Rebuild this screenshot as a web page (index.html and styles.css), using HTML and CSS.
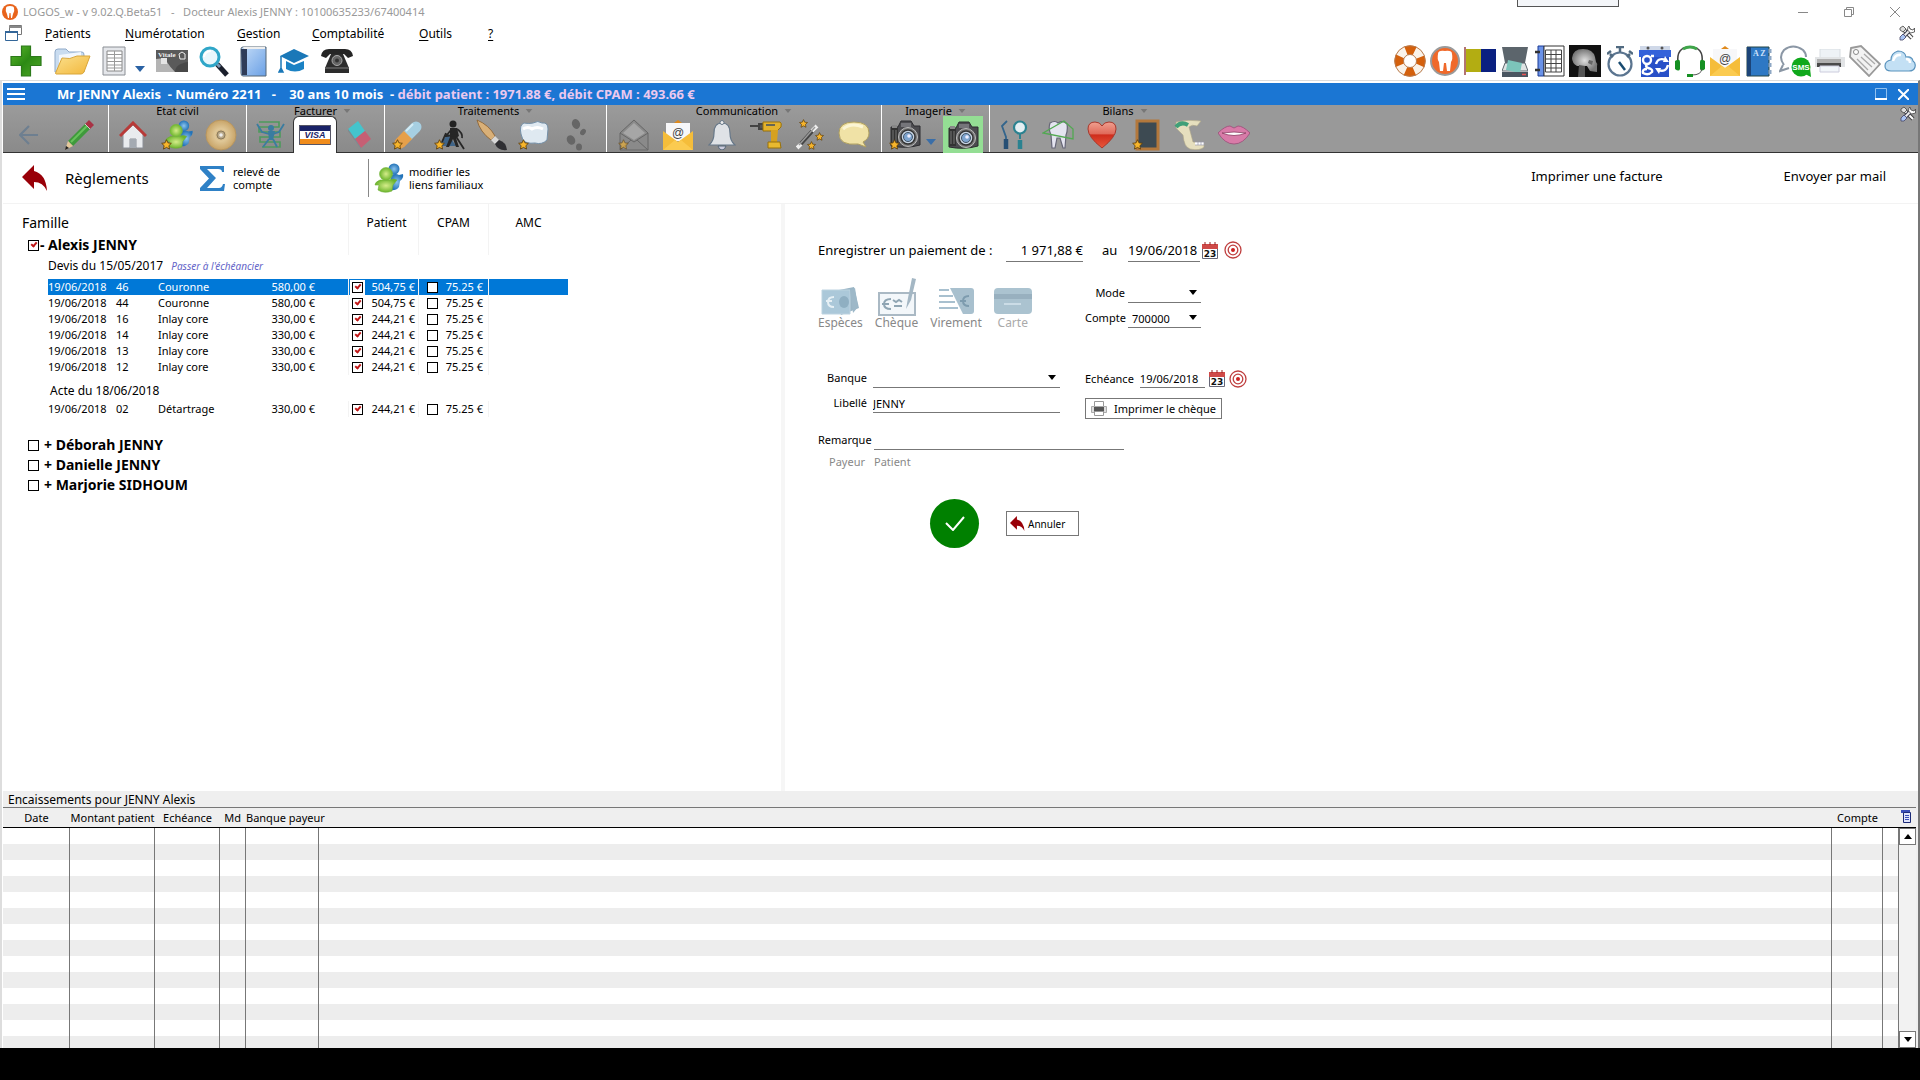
FILE: index.html
```html
<!DOCTYPE html>
<html lang="fr">
<head>
  <meta charset="UTF-8">
  <title>LOGOS_w - Règlements</title>
  <link rel="stylesheet" href="styles.css">
</head>
<body>

<!-- shared icons -->
<svg class="defs" width="0" height="0" aria-hidden="true">
  <defs>
    <linearGradient id="gGreen" x1="0" y1="0" x2="1" y2="1"><stop offset="0" stop-color="#5cb82c"/><stop offset=".5" stop-color="#2c8a14"/><stop offset="1" stop-color="#4fa828"/></linearGradient>
    <linearGradient id="gFolder" x1="0" y1="0" x2="1" y2="1"><stop offset="0" stop-color="#fbe08c"/><stop offset="1" stop-color="#f2b73c"/></linearGradient>
    <linearGradient id="gBlue" x1="0" y1="0" x2="1" y2="1"><stop offset="0" stop-color="#c4dcf7"/><stop offset="1" stop-color="#6aa0e6"/></linearGradient>
    <linearGradient id="gHeart" x1="0" y1="0" x2="0" y2="1"><stop offset="0" stop-color="#f0a090"/><stop offset=".45" stop-color="#e06a5a"/><stop offset=".5" stop-color="#cf2c1c"/><stop offset="1" stop-color="#e8583c"/></linearGradient>
    <radialGradient id="gLeaf"><stop offset="0" stop-color="#d5ec8a"/><stop offset="1" stop-color="#6cb52c"/></radialGradient>
    <radialGradient id="gBall"><stop offset="0" stop-color="#8cc4ee"/><stop offset="1" stop-color="#2373b8"/></radialGradient>
    <radialGradient id="gCd"><stop offset="0" stop-color="#b08a50"/><stop offset=".4" stop-color="#e0c898"/><stop offset="1" stop-color="#c8a468"/></radialGradient>
    <radialGradient id="gSkull"><stop offset="0" stop-color="#e0e0e0"/><stop offset="1" stop-color="#777"/></radialGradient>
  </defs>
  <symbol id="star" viewBox="0 0 12 12"><path d="M6 .8l1.600 3.400 3.700.5-2.700 2.600.7 3.700L6 9.200 2.700 11l.7-3.700L.7 4.700l3.700-.5z" fill="#f7b52c" stroke="#5a3a08" stroke-width=".9"/></symbol>
  <symbol id="people" viewBox="0 0 30 30">
    <path d="M17 12q5-2 8 0l4-1q1 4-3 7l-1 6q-3 4-9 3z" fill="url(#gBall)"/><circle cx="20" cy="6" r="5.500" fill="url(#gBall)"/>
    <path d="M6 17q-5 2-5 5l4 0-1 5q6 4 14 1l1-6 4-5q-4-2-8 0z" fill="url(#gLeaf)" stroke="#6fae36" stroke-width=".6"/><circle cx="12" cy="11" r="6.500" fill="url(#gLeaf)" stroke="#7cb944" stroke-width=".6"/>
  </symbol>
  <symbol id="tools" viewBox="0 0 16 16">
    <path d="M4 4l9 9" stroke="#444" stroke-width="4"/><path d="M4 4l9 9" stroke="#fff" stroke-width="2"/>
    <path d="M12 4L4 12" stroke="#445" stroke-width="4"/><path d="M12 4L5 11" stroke="#eee" stroke-width="2"/>
    <path d="M1 12l3-3 3 3-3 3H1z" fill="#a9c4f5" stroke="#446" stroke-width=".8"/><path d="M10 1l1 3 3 1 1.500-2v4l-4 1-3-3 .5-3z" fill="#fff" stroke="#444" stroke-width=".8"/>
    <path d="M1 3l3-2 3 3-3 3-3-2z" fill="#ddd" stroke="#444" stroke-width=".8"/>
  </symbol>
  <symbol id="undo" viewBox="0 0 26 26"><path d="M0 12L12 0v6q12 3 13 20-4-9-13-9v7z" fill="#990008"/></symbol>
  <symbol id="mail" viewBox="0 0 32 32"><path d="M12 4l4-3 4 3z" fill="#e08a1c"/><path d="M4 4h24v18H4z" fill="#f7f7f9"/><path d="M1 12l15 11 15-11v19H1z" fill="#f5bd3a"/><path d="M1 31l12-10 3 2 3-2 12 10z" fill="#fbcb50"/></symbol>
  <symbol id="camera" viewBox="0 0 32 30">
    <path d="M2 8h7l3-6h10l3 5h6v19q-14 4-29 1z" fill="#4b4b4f" stroke="#2c2c30"/><path d="M2 9h7v17H2z" fill="#333"/><path d="M12 4h10v4H12z" fill="#75757a"/><path d="M3 6h5v3H3z" fill="#888"/><path d="M4 11v13M7 11v13" stroke="#777"/>
    <circle cx="19" cy="18" r="9.500" fill="#777" stroke="#bbb"/><circle cx="19" cy="18" r="7" fill="#c6d4e4" stroke="#333" stroke-width="1.500"/><circle cx="19" cy="18" r="4.500" fill="#7da4cf" stroke="#456"/><circle cx="20" cy="17" r="1.800" fill="#eef"/>
  </symbol>
  <symbol id="calendar" viewBox="0 0 16 17"><path d="M.5 2.500h15v14H.5z" fill="#fff" stroke="#667"/><path d="M0 2h16v5H0z" fill="#cf4a48"/><path d="M3 0v3M8 0v3M13 0v3" stroke="#922"/></symbol>
  <symbol id="target" viewBox="0 0 18 18"><g fill="none" stroke="#bf3f3f"><circle cx="9" cy="9" r="8" stroke-width="1.300"/><circle cx="9" cy="9" r="4.800" stroke-width="1.300"/></g><circle cx="9" cy="9" r="2" fill="#c22"/></symbol>
  <symbol id="caret" viewBox="0 0 10 6"><path d="M0 0h10L5 6z"/></symbol>
</svg>

<div class="app">
  <div class="notch"></div>

  <header class="titlebar">
    <svg width="16" height="16" viewBox="0 0 16 16"><circle cx="8" cy="8" r="8" fill="#e8641c"/><path d="M4 4q0-2 4-2t4 2q1 3-1 6l-1 4H9L8.500 9h-1L7 14H6l-1-4Q3 7 4 4z" fill="#fff"/></svg>
    <span class="app-title">LOGOS_w - v 9.02.Q.Beta51 &nbsp; - &nbsp; Docteur Alexis JENNY : 10100635233/67400414</span>
    <div class="win-buttons">
      <button aria-label="Réduire"><svg width="10" height="10" viewBox="0 0 10 10"><path d="M0 5.500h10" stroke="#888"/></svg></button>
      <button aria-label="Restaurer"><svg width="10" height="10" viewBox="0 0 10 10"><path d="M.5 2.500h7v7h-7zM2.500 2V.5h7v7H8" fill="none" stroke="#888"/></svg></button>
      <button aria-label="Fermer"><svg width="10" height="10" viewBox="0 0 10 10"><path d="M0 0l10 10M10 0L0 10" stroke="#888"/></svg></button>
    </div>
  </header>

  <nav class="menubar">
    <svg width="17" height="16" viewBox="0 0 17 16"><path d="M4.500.5h12v9h-12z" fill="#fff" stroke="#777"/><path d="M4 1h13v2H4z" fill="#888"/><path d="M.5 6.500h12v9H.5z" fill="#fff" stroke="#369"/><path d="M0 6h13v2H0z" fill="#369"/></svg>
    <a href="#" class="m-patients"><u>P</u>atients</a>
    <a href="#" class="m-num"><u>N</u>umérotation</a>
    <a href="#" class="m-gestion"><u>G</u>estion</a>
    <a href="#" class="m-compta"><u>C</u>omptabilité</a>
    <a href="#" class="m-outils"><u>O</u>utils</a>
    <a href="#"><u>?</u></a>
    <button class="tools" aria-label="Options"><svg width="16" height="16"><use href="#tools"/></svg></button>
  </nav>

  <div class="mainbar">
    <div class="main-left">
      <button aria-label="Nouveau"><svg width="32" height="32" viewBox="0 0 32 32"><path d="M11.500 1h9v10.500H31v9H20.500V31h-9V20.500H1v-9h10.500z" fill="url(#gGreen)" stroke="#2c7a1a" stroke-width="1.200"/></svg></button>
      <button aria-label="Ouvrir"><svg width="38" height="28" viewBox="0 0 38 28"><path d="M2 25V5q0-3 3-3h8l3 3h13q2 0 2 3v17z" fill="#c9dcf0" stroke="#8fa9c8"/><path d="M6 8l22-3v12H6z" fill="#f2f7fd"/><path d="M9 11q8 2 15-2l13 0-6 16q-1 2-3 2H3q-1 0 0-2z" fill="url(#gFolder)" stroke="#d9a63a"/></svg></button>
      <button class="list-btn" aria-label="Listes">
        <svg width="25" height="30" viewBox="0 0 25 30"><path d="M1 1h22v28H1z" fill="#e4e6ea" stroke="#8a8e94"/><path d="M5 5h15v20H5z" fill="#fff" stroke="#888"/><path d="M5 8.500h15M5 12h15M5 15.500h15M5 19h15M5 22h15M12.500 5v20" stroke="#999"/></svg>
        <svg width="10" height="6" fill="#2a62a4"><use href="#caret"/></svg>
      </button>
      <button aria-label="Carte Vitale"><svg width="32" height="22" viewBox="0 0 32 22"><path d="M0 0h32v22H0z" fill="#5a5a5a"/><path d="M0 9q8-2 11 3t8 10H0z" fill="#b4b4b4"/><path d="M5 8h6v6H5z" fill="#e4e4e4"/><path d="M19 22q0-8 13-10v10z" fill="#484848"/><text x="2" y="7" class="vitale">Vitale</text><path d="M23 4l3-2 3 2v5h-5z" fill="none" stroke="#eee"/></svg></button>
      <button aria-label="Rechercher"><svg width="30" height="31" viewBox="0 0 30 31"><path d="M18 18l10 11" stroke="#1a1f2c" stroke-width="5"/><path d="M17 17l4 4" stroke="#7b98b5" stroke-width="3"/><circle cx="11" cy="11" r="9" fill="#e9f7fc" stroke="#2fa6c8" stroke-width="3"/><path d="M5 11q1-6 7-6" fill="none" stroke="#fff" stroke-width="2"/></svg></button>
      <button aria-label="Livre"><svg width="27" height="31" viewBox="0 0 27 31"><path d="M1 3q0-2 2-2h23v29H3q-2 0-2-3z" fill="url(#gBlue)" stroke="#567"/><path d="M1 3h6v26H2z" fill="#2f3c58"/><path d="M3 1h22v2H4z" fill="#eee"/></svg></button>
      <button aria-label="Formation"><svg width="32" height="26" viewBox="0 0 32 26"><path d="M16 1L31 8l-15 7L2 8z" fill="#1a78b8"/><path d="M8 13l8 4 10-4v8q-9 5-18 0z" fill="#1c82c4"/><path d="M3 8v12l-2 4h4l-2-4" fill="#1a78b8" stroke="#1a78b8" stroke-width="1.500"/></svg></button>
      <button aria-label="Téléphone"><svg width="32" height="26" viewBox="0 0 32 26"><path d="M0 8Q1 1 8 1h16q7 0 8 7l-5 2-4-4H9l-4 4z" fill="#252525"/><path d="M10 6h12l6 14v5H4v-5z" fill="#2c2c2c"/><path d="M4 19h24v2H4z" fill="#555"/><circle cx="16" cy="12.500" r="5" fill="#666" stroke="#aaa"/><circle cx="16" cy="12.500" r="2" fill="#333"/></svg></button>
    </div>
    <div class="main-right">
      <button aria-label="Aide"><svg width="32" height="32" viewBox="0 0 32 32"><circle cx="16" cy="16" r="11" fill="none" stroke="#faf3ea" stroke-width="9"/><circle cx="16" cy="16" r="11" fill="none" stroke="#d4600c" stroke-width="9" stroke-dasharray="9 8.280" stroke-dashoffset="4.500"/><g fill="none" stroke="#b8794a"><circle cx="16" cy="16" r="15.300"/><circle cx="16" cy="16" r="6.500"/></g></svg></button>
      <button aria-label="Dentaire"><svg width="30" height="30" viewBox="0 0 30 30"><circle cx="15" cy="15" r="14" fill="#f0692a" stroke="#9a9a9a" stroke-width="2"/><path d="M8 8q0-4 7-3 7-1 7 3 1 5-1 8l-1 9h-3l-1-8h-2l-1 8h-3l-1-9q-2-3-1-8z" fill="#fff"/></svg></button>
      <button aria-label="Drapeau"><svg width="32" height="28" viewBox="0 0 32 28"><path d="M1 0v28" stroke="#944" stroke-width="1.500"/><path d="M2 2h15v23H2z" fill="#b3ad12"/><path d="M17 2h15v23H17z" fill="#0a2080"/></svg></button>
      <button aria-label="Scanner"><svg width="26" height="31" viewBox="0 0 26 31"><path d="M0 1h26l-3 16H3z" fill="#5c656c"/><path d="M3 17h20l3 8H0z" fill="#dfe4e4" stroke="#5c656c"/><path d="M6 14l14 3-2 10-14-3z" fill="#7cc4ba"/><path d="M0 26h26v5H0z" fill="#4a5560"/><path d="M20 28.500h4" stroke="#e55" stroke-width="1.500"/></svg></button>
      <button aria-label="Agenda"><svg width="30" height="32" viewBox="0 0 30 32"><path d="M3 1h6v30H3z" fill="#6a92e8" stroke="#1b3a94"/><path d="M9 1h20v30H9z" fill="#fff" stroke="#333"/><path d="M10.500 5h16v22h-16zM10 9.500h17M10 14h17M10 18.500h17M10 23h17M16 5v22M21 5v22" fill="none" stroke="#444"/><path d="M0 7h5M0 25h5" stroke="#333" stroke-width="2.500"/></svg></button>
      <button aria-label="Radio"><svg width="32" height="32" viewBox="0 0 32 32"><path d="M0 0h32v32H0z" fill="#111"/><path d="M3 13Q4 4 14 4q10 0 12 8l1 5q2 2 1 4l0 6-7-1-3-5H8q-5-3-5-8z" fill="url(#gSkull)"/><path d="M10 20l6 1v11H9z" fill="#555"/><path d="M20 15l4 1-1 4-4-2z" fill="#666"/></svg></button>
      <button aria-label="Chronomètre"><svg width="26" height="31" viewBox="0 0 26 31"><circle cx="13" cy="18" r="11.500" fill="#fff" stroke="#5b7590" stroke-width="2.200"/><path d="M9 1h8M13 1v5M3 8l3 3M23 8l-3 3M0 8l4-3M26 8l-4-3" stroke="#506a80" stroke-width="2.500"/><path d="M12 16l6 8" stroke="#174a70" stroke-width="2.500"/></svg></button>
      <button aria-label="Google Agenda"><svg width="32" height="32" viewBox="0 0 32 32"><path d="M2 2h28v30H2z" fill="#2850c8"/><path d="M1 1h30v5H1z" fill="#cfd8e8"/><path d="M0 5h32v7H0z" fill="#3462da"/><circle cx="9" cy="3" r="1.500" fill="#555"/><circle cx="23" cy="3" r="1.500" fill="#555"/><g fill="none" stroke="#fff" stroke-width="2.400"><circle cx="8" cy="15" r="4"/><path d="M12 11h3M9 19q-4 2 0 4 5 1 4 4-4 4-9 1-1-4 4-4"/><path d="M17 19q2-7 10-4M29 20q-2 8-10 5"/></g><path d="M26 11l4 6h-6zM20 29l-4-6h6z" fill="#fff"/></svg></button>
      <button aria-label="Assistance"><svg width="32" height="32" viewBox="0 0 32 32"><path d="M4 18Q2 2 16 2t12 16" fill="none" stroke="#444" stroke-width="1.500"/><path d="M9 4q7-4 14 0" fill="none" stroke="#3fa54a" stroke-width="3"/><path d="M1 16q5-3 5 1v7q-1 3-5 0zM31 16q-5-3-5 1v7q1 3 5 0z" fill="#159022"/><path d="M28 24q-1 6-10 6" fill="none" stroke="#555"/><path d="M13 29h6v3h-6z" fill="#159022"/></svg></button>
      <button aria-label="E-mail"><svg width="32" height="32"><use href="#mail"/><text x="16" y="18" text-anchor="middle" class="at">@</text></svg></button>
      <button aria-label="Annuaire"><svg width="27" height="31" viewBox="0 0 27 31"><path d="M1 1h22v29H1z" fill="#2e78c4" stroke="#244"/><path d="M1 1h4v29H1z" fill="#1c4478"/><path d="M24 3v4M24 10v4M24 17v4M24 24v4" stroke="#8ea7c4" stroke-width="3"/><text x="7" y="10" class="az">A Z</text></svg></button>
      <button aria-label="SMS"><svg width="32" height="32" viewBox="0 0 32 32"><path d="M4 20l-3 6 9-3M5 20Q-1 12 5 5q9-7 19 0 3 3 3 7" fill="none" stroke="#8b97a5" stroke-width="2"/><circle cx="22" cy="22" r="9.500" fill="#10a81c"/><path d="M26 29l6 3-1-9z" fill="#10a81c"/><text x="22" y="25" text-anchor="middle" class="sms">SMS</text></svg></button>
      <button aria-label="Imprimer"><svg width="32" height="24" viewBox="0 0 32 24"><path d="M6 0h20v10H6z" fill="#eef2f6" stroke="#d8dde2"/><path d="M1 8h30v10H1z" fill="#e2e4e6"/><path d="M3 14h24v4H3z" fill="#4a4a4a"/><path d="M3 10h24v4H3z" fill="#b0b0b0"/><path d="M6 17h19v6H6z" fill="#f2f6fa" stroke="#ccd"/></svg></button>
      <button aria-label="Étiquettes"><svg width="32" height="32" viewBox="0 0 32 32"><path d="M2 3l10-2 19 18-11 12L1 12z" fill="#f3f3f3" stroke="#999" stroke-width="1.800"/><circle cx="7" cy="7" r="2.500" fill="#fff" stroke="#888"/><path d="M8 14l11 11M12 12l11 10M15 9l11 10" stroke="#aaa" stroke-width="1.300"/></svg></button>
      <button aria-label="Cloud"><svg width="32" height="22" viewBox="0 0 32 22"><path d="M7 21q-6 0-6-5t6-6q0-7 7-9 7 0 8 6 6-1 7 4 3 2 2 6-1 4-6 4z" fill="#c3e0f4" stroke="#5a93bd" stroke-width="1.200"/><path d="M9 11q2-7 8-6M22 9q4 0 4 4" fill="none" stroke="#fff" stroke-width="2.500"/></svg></button>
    </div>
  </div>

  <div class="window">
    <div class="patient-bar">
      <button class="burger" aria-label="Menu"><i></i><i></i><i></i></button>
      <h1>Mr JENNY Alexis &nbsp;- Numéro 2211 &nbsp; - &nbsp; &nbsp;30 ans 10 mois &nbsp;- <em>débit patient : 1971.88 €, débit CPAM : 493.66 €</em></h1>
      <button aria-label="Agrandir"><svg width="12" height="12" viewBox="0 0 12 12"><path d="M.5.5h11v10H.5z" fill="none" stroke="#8fc0f0"/><path d="M0 11h12" stroke="#fff" stroke-width="2"/></svg></button>
      <button aria-label="Fermer la fiche"><svg width="11" height="11" viewBox="0 0 11 11"><path d="M0 0l11 11M11 0L0 11" stroke="#fff" stroke-width="2"/></svg></button>
    </div>

    <div class="ribbon">
      <section class="group g-edit">
        <div class="caption"></div>
        <div class="icons">
          <button aria-label="Retour"><svg width="20" height="20" viewBox="0 0 20 20"><path d="M19 10H2M10 1l-9 9 9 9" fill="none" stroke="#6e7f90" stroke-width="2.200"/></svg></button>
          <button aria-label="Modifier"><svg width="30" height="30" viewBox="0 0 30 30"><path d="M3 21L20 4l5 5L8 26z" fill="#3f9a3c"/><path d="M6 22L22 6" stroke="#67c25c" stroke-width="2"/><path d="M20 4l4-4 5 5-4 4z" fill="#a83244"/><path d="M20 4l5 5" stroke="#ccc"/><path d="M3 21l5 5-8 4z" fill="#e3c79a"/><path d="M0 30l1-4 3 2z" fill="#222"/></svg></button>
        </div>
      </section>
      <section class="group g-civil">
        <div class="caption">Etat civil</div>
        <div class="icons">
          <button aria-label="Domicile"><svg width="28" height="28" viewBox="0 0 28 28"><path d="M4 13L14 4l10 9v14h-7v-9h-6v9H4z" fill="#e9ebee" stroke="#8c9098"/><path d="M11 18h6v9h-6z" fill="#a4aab2"/><path d="M1 15L14 2l13 13" fill="none" stroke="#b83a38" stroke-width="3"/></svg></button>
          <button aria-label="Famille"><svg width="32" height="30" viewBox="0 0 32 30"><use href="#people" x="3" width="30" height="29"/><use href="#star" y="19" width="11" height="11"/></svg></button>
          <button aria-label="Disque"><svg width="32" height="32" viewBox="0 0 32 32"><circle cx="16" cy="16" r="15" fill="url(#gCd)" stroke="#b89660"/><circle cx="16" cy="16" r="4" fill="#b9a98a" stroke="#8a7a5c"/><circle cx="16" cy="16" r="1.800" fill="#eee"/></svg></button>
        </div>
      </section>
      <section class="group g-facturer">
        <div class="caption">Facturer <svg width="8" height="4"><use href="#caret"/></svg></div>
        <div class="icons">
          <button aria-label="Actes"><svg width="30" height="29" viewBox="0 0 30 29"><path d="M3 2h20v5H3v5h21v5H4v5h20v5H6" fill="none" stroke="#4d9a5c" stroke-width="1.600"/><circle cx="15" cy="8" r="3" fill="#3a7ca0"/><path d="M1 4l5 8 7 2M28 4l-5 8-6 2M13 19l-6 8M17 19l4 8" fill="none" stroke="#3a7ca0" stroke-width="1.800"/><path d="M12 11h7l-2 9h-4z" fill="#3a7ca0"/></svg></button>
          <button class="tab" aria-label="Règlements"><svg width="32" height="20" viewBox="0 0 32 20"><path d="M0 0h32v20H0z" fill="#fff"/><path d="M0 0h32v6H0z" fill="#1a2368"/><path d="M0 14h32v6H0z" fill="#f08c1c"/><path d="M.5.5h31v19H.5z" fill="none" stroke="#556"/><text x="16" y="13" text-anchor="middle" class="visa">VISA</text></svg></button>
          <button aria-label="Effacer"><svg width="25" height="29" viewBox="0 0 25 29"><path d="M1 9L11 1l7 10-10 8z" fill="#45c4cc"/><path d="M8 19l10-8 6 8-10 9z" fill="#c65f74"/><path d="M1 9l7 10 6 9v1L1 11z" fill="#7a8a90"/></svg></button>
        </div>
      </section>
      <section class="group g-trait">
        <div class="caption">Traitements <svg width="8" height="4"><use href="#caret"/></svg></div>
        <div class="icons">
          <button aria-label="Médicaments"><svg width="32" height="32" viewBox="0 0 32 32"><path d="M8 24L16 16" stroke="#e6a04a" stroke-width="11" stroke-linecap="round"/><path d="M24 8l-8 8" stroke="#a6cfe2" stroke-width="11" stroke-linecap="round"/><path d="M8 16l8-8 8 8-8 8z" fill="none"/><path d="M12 12l8 8-8 8-9-6z" fill="#e6a04a"/><path d="M14 12l7-7" stroke="#d4ecf6" stroke-width="2"/><use href="#star" y="20" width="11" height="11"/></svg></button>
          <button aria-label="Travaux"><svg width="32" height="30" viewBox="0 0 32 30"><path d="M4 26l10-12 8 12z" fill="#3f6488"/><circle cx="19" cy="4" r="3.500" fill="#222"/><path d="M16 8h7l2 8-3 2 3 9h-3l-3-8-4 8h-3l4-10z" fill="#262626"/><path d="M23 9q6 4 5 9M17 10l-5 6 9-1 9 14M12 13l-4 9" fill="none" stroke="#262626" stroke-width="1.800"/><use href="#star" y="19" width="11" height="11"/></svg></button>
          <button aria-label="Pinceau"><svg width="32" height="32" viewBox="0 0 32 32"><path d="M1 1q12 5 18 16l-4 4Q4 13 1 1z" fill="#d9b078" stroke="#8a5e2c" stroke-width=".8"/><path d="M15 21l4-4 4 4-4 4z" fill="#d8d8d8"/><path d="M19 25l4-4q7 2 8 10-9 1-12-6z" fill="#2f2f33"/></svg></button>
          <button aria-label="Couronne"><svg width="32" height="30" viewBox="0 0 32 30"><path d="M3 14Q1 5 6 3q5 1 9 0 5-3 9 0 6-1 6 6l-1 11q-5 5-12 3-9 1-12-3z" fill="#dfe9f1" stroke="#7590a8"/><path d="M5 9q5-3 9 0 5-3 11 0" fill="none" stroke="#fff" stroke-width="3"/><use href="#star" y="19" width="11" height="11"/></svg></button>
          <button aria-label="Suivi"><svg width="20" height="32" viewBox="0 0 20 32" fill="#666"><ellipse cx="10" cy="5" rx="4" ry="5" transform="rotate(-20 10 5)"/><ellipse cx="17" cy="13" rx="2.500" ry="3.500" transform="rotate(35 17 13)"/><ellipse cx="5" cy="21" rx="4" ry="5" transform="rotate(-30 5 21)"/><ellipse cx="13" cy="28" rx="3" ry="3.500"/></svg></button>
        </div>
      </section>
      <section class="group g-comm">
        <div class="caption">Communication <svg width="8" height="4"><use href="#caret"/></svg></div>
        <div class="icons">
          <button aria-label="Courriers"><svg width="32" height="32" viewBox="0 0 32 32"><path d="M2 14L16 1l14 13v17H2z" fill="#8a8a8a" stroke="#666"/><path d="M2 14l14 9 14-9M2 31l11-10M30 31L19 21" fill="none" stroke="#666"/><path d="M5 14L16 4l11 10-11 7z" fill="#a6a6a6"/><g opacity=".6"><use href="#star" y="20" width="11" height="11"/></g></svg></button>
          <button aria-label="Messagerie"><svg width="32" height="32"><use href="#mail"/><text x="16" y="18" text-anchor="middle" class="at">@</text></svg></button>
          <button aria-label="Rappels"><svg width="28" height="30" viewBox="0 0 28 30"><path d="M14 3q8 0 8 10 0 8 5 12H1q5-4 5-12Q6 3 14 3z" fill="#dfe2e6" stroke="#667788" stroke-width="1.200"/><circle cx="14" cy="2.500" r="2" fill="#eee" stroke="#678"/><path d="M10 26h8q-1 4-4 4t-4-4z" fill="#ccd" stroke="#567"/></svg></button>
          <button aria-label="Outils labo"><svg width="32" height="28" viewBox="0 0 32 28"><path d="M0 5h9M9 3h5v5H9z" stroke="#444" stroke-width="2" fill="#555"/><path d="M13 1h17q2 1 1 5l-4 4H13z" fill="#e4b22c" stroke="#97700c"/><path d="M21 9h7l-1 12h-6z" fill="#d6a11f"/><path d="M18 21h12l1 6H18z" fill="#e8b930" stroke="#97700c"/><path d="M16 4h9" stroke="#665" stroke-width="2"/></svg></button>
          <button aria-label="Assistant"><svg width="32" height="32" viewBox="0 0 32 32"><path d="M3 29L22 8" stroke="#444" stroke-width="4"/><path d="M3 29l4-4M18 12l5-5" stroke="#eee" stroke-width="4"/><path d="M5 26L21 8" stroke="#999" stroke-width="1.500"/><use href="#star" x="5" width="9" height="9"/><use href="#star" x="21" y="13" width="9" height="9"/><use href="#star" x="13" y="22" width="9" height="9"/></svg></button>
          <button aria-label="Notes"><svg width="32" height="27" viewBox="0 0 32 27"><path d="M16 1q15 0 15 11 0 6-6 9l3 5-8-3Q1 25 1 12 1 1 16 1z" fill="#f0e2a6" stroke="#b0a060"/><path d="M5 8q8-7 20-2" fill="none" stroke="#fbf5d4" stroke-width="3"/></svg></button>
        </div>
      </section>
      <section class="group g-img">
        <div class="caption">Imagerie <svg width="8" height="4"><use href="#caret"/></svg></div>
        <div class="icons">
          <button class="cam" aria-label="Photos"><svg width="33" height="31" viewBox="0 0 33 31"><use href="#camera" width="32" height="30"/><use href="#star" y="20" width="11" height="11"/></svg><svg width="10" height="6" fill="#3a6ea8"><use href="#caret"/></svg></button>
          <button class="cam-on" aria-label="Appareil photo"><svg width="32" height="30"><use href="#camera"/></svg></button>
        </div>
      </section>
      <section class="group g-bilans">
        <div class="caption">Bilans <svg width="8" height="4"><use href="#caret"/></svg></div>
        <div class="icons">
          <button aria-label="Examen"><svg width="28" height="30" viewBox="0 0 28 30"><path d="M7 1L2 6l4 11v12" fill="none" stroke="#33658c" stroke-width="1.800"/><path d="M6 19v10" stroke="#274f74" stroke-width="4.500"/><circle cx="20" cy="7.500" r="6" fill="#e4eef2" stroke="#2b8290" stroke-width="2.200"/><path d="M20 13v6" stroke="#2b8290" stroke-width="2"/><path d="M20 20v9" stroke="#2b8290" stroke-width="4.500"/></svg></button>
          <button aria-label="Dent"><svg width="32" height="30" viewBox="0 0 32 30"><path d="M8 3q5-3 8 0 5-3 9 1 1 6-1 11l-1 13h-2l-3-10h-3l-2 10h-3L9 15Q6 9 8 3z" fill="#e4e4f0" stroke="#667" stroke-width="1.200"/><path d="M1 13L22 1l9 8v10z" fill="none" stroke="#52a852" stroke-width="1.300"/></svg></button>
          <button aria-label="Santé"><svg width="30" height="28" viewBox="0 0 30 28"><path d="M15 27Q1 16 1 8q0-7 7-7 5 0 7 4 2-4 7-4 7 0 7 7 0 8-14 19z" fill="url(#gHeart)" stroke="#a8382c"/></svg></button>
          <button aria-label="Tableau"><svg width="28" height="32" viewBox="0 0 28 32"><path d="M5 2h21v28H5z" fill="#3d4a52" stroke="#b3783c" stroke-width="3"/><use href="#star" y="20" width="11" height="11"/></svg></button>
          <button aria-label="Mâchoire"><svg width="32" height="30" viewBox="0 0 32 30"><path d="M2 2q12-3 25-1l-4 5q-5-2-8 1l4 15 11 1v4q-4 4-14 2-6-2-7-14L2 8z" fill="#e6dfbe" stroke="#b0a888" stroke-width=".6"/><path d="M2 7q5-6 12-2" fill="none" stroke="#40a078" stroke-width="4"/><path d="M21 22h9v3h-9M24 22v3M27 22v3" fill="#fff" stroke="#99a" stroke-width=".7"/></svg></button>
          <button aria-label="Esthétique"><svg width="32" height="20" viewBox="0 0 32 20"><path d="M0 8Q7 1 12 1l4 2 4-2q5 0 12 7-7 11-16 11T0 8z" fill="#d87ba8" stroke="#9c4c78" stroke-width=".8"/><path d="M4 8q12-2 24 0-12 5-24 0z" fill="#fff" stroke="#8a3860" stroke-width=".8"/></svg></button>
        </div>
      </section>
      <button class="tools" aria-label="Options du ruban"><svg width="16" height="16"><use href="#tools"/></svg></button>
    </div>

    <div class="page-head">
      <button class="back" aria-label="Revenir"><svg width="26" height="26"><use href="#undo"/></svg></button>
      <h2>Règlements</h2>
      <button class="releve"><svg width="25" height="25" viewBox="0 0 25 25"><path d="M0 0h24v6h-2q0-3-4-3H7l9 9-9 10h12q3 0 4-4h2l-1 7H0v-3l9-9.500L0 3z" fill="#2f81c6"/></svg><span>relevé de<br>compte</span></button>
      <button class="liens"><svg width="30" height="30"><use href="#people"/></svg><span>modifier les<br>liens familiaux</span></button>
      <a href="#" class="print-link">Imprimer une facture</a>
      <a href="#" class="mail-link">Envoyer par mail</a>
    </div>

    <main>
      <section class="family">
        <table class="acts">
          <colgroup><col class="c-pad"><col class="c-date"><col class="c-dent"><col class="c-lib"><col class="c-prix"><col class="c-part"><col class="c-part"><col class="c-amc"></colgroup>
          <thead>
            <tr><th colspan="5" class="famille">Famille</th><th class="patient">Patient</th><th>CPAM</th><th>AMC</th></tr>
          </thead>
          <tbody>
            <tr class="person open"><td colspan="5"><label><input type="checkbox" checked>- Alexis JENNY</label></td><td></td><td></td><td></td></tr>
            <tr class="sub"><td></td><td colspan="7">Devis du 15/05/2017 <a href="#">Passer à l'échéancier</a></td></tr>
            <tr class="act selected"><td></td><td>19/06/2018</td><td>46</td><td>Couronne</td><td>580,00 €</td><td><label><input type="checkbox" checked>504,75 €</label></td><td><label><input type="checkbox">75.25 €</label></td><td></td></tr>
            <tr class="act"><td></td><td>19/06/2018</td><td>44</td><td>Couronne</td><td>580,00 €</td><td><label><input type="checkbox" checked>504,75 €</label></td><td><label><input type="checkbox">75.25 €</label></td><td></td></tr>
            <tr class="act"><td></td><td>19/06/2018</td><td>16</td><td>Inlay core</td><td>330,00 €</td><td><label><input type="checkbox" checked>244,21 €</label></td><td><label><input type="checkbox">75.25 €</label></td><td></td></tr>
            <tr class="act"><td></td><td>19/06/2018</td><td>14</td><td>Inlay core</td><td>330,00 €</td><td><label><input type="checkbox" checked>244,21 €</label></td><td><label><input type="checkbox">75.25 €</label></td><td></td></tr>
            <tr class="act"><td></td><td>19/06/2018</td><td>13</td><td>Inlay core</td><td>330,00 €</td><td><label><input type="checkbox" checked>244,21 €</label></td><td><label><input type="checkbox">75.25 €</label></td><td></td></tr>
            <tr class="act"><td></td><td>19/06/2018</td><td>12</td><td>Inlay core</td><td>330,00 €</td><td><label><input type="checkbox" checked>244,21 €</label></td><td><label><input type="checkbox">75.25 €</label></td><td></td></tr>
            <tr class="sub late"><td></td><td colspan="7">Acte du 18/06/2018</td></tr>
            <tr class="act"><td></td><td>19/06/2018</td><td>02</td><td>Détartrage</td><td>330,00 €</td><td><label><input type="checkbox" checked>244,21 €</label></td><td><label><input type="checkbox">75.25 €</label></td><td></td></tr>
          </tbody>
        </table>
        <ul class="others">
          <li><label><input type="checkbox">+ Déborah JENNY</label></li>
          <li><label><input type="checkbox">+ Danielle JENNY</label></li>
          <li><label><input type="checkbox">+ Marjorie SIDHOUM</label></li>
        </ul>
      </section>

      <form class="payment">
        <div class="amount-row">
          <label for="montant">Enregistrer un paiement de :</label>
          <input id="montant" class="montant" type="text" value="1 971,88 €">
          <label for="datePaie" class="au">au</label>
          <input id="datePaie" class="date-paie" type="text" value="19/06/2018">
          <button type="button" aria-label="Calendrier"><svg width="16" height="17"><use href="#calendar"/><text x="8" y="15" text-anchor="middle" class="cal-day">23</text></svg></button>
          <button type="button" aria-label="Aujourd'hui"><svg width="18" height="18"><use href="#target"/></svg></button>
        </div>

        <div class="line modes-line">
          <div class="modes">
            <button type="button"><svg width="40" height="32" viewBox="0 0 40 32"><path d="M14 7l20-4 5 21-18 7z" fill="#9ab5c5"/><path d="M2 6h28v24H2z" fill="#abc8d9" stroke="#bcd3e0"/><path d="M30 6l5-2 3 19-5 6z" fill="#9db8c8"/><path d="M14 13q-6 0-6 5t6 5M6 17h6" fill="none" stroke="#e6f0f5" stroke-width="2"/><ellipse cx="24" cy="18" rx="5" ry="6" fill="#8fafc2"/></svg>Espèces</button>
            <button type="button"><svg width="40" height="38" viewBox="0 0 40 38"><path d="M2 15h36v22H2z" fill="#f3f7fa" stroke="#aab9c4" stroke-width="2"/><path d="M14 21q-7 0-7 5t7 5M5 26h7" fill="none" stroke="#8fa5b3" stroke-width="2"/><path d="M16 22l3 2 3-2 3 2M17 28h8" fill="none" stroke="#8fa5b3" stroke-width="2"/><path d="M29 31l2-11 4-20 4 1-5 21z" fill="#a4b7c4"/></svg>Chèque</button>
            <button type="button"><svg width="38" height="32" viewBox="0 0 38 32"><path d="M2 6h10M2 12h14M2 18h16M2 24h19" stroke="#a8c0cf" stroke-width="2"/><path d="M13 4h21q3 0 3 3v20q0 3-3 3h-8z" fill="#a8c0ce"/><path d="M32 12q-6 0-6 5t6 5M23 17h6" fill="none" stroke="#7d9bae" stroke-width="2"/></svg>Virement</button>
            <button type="button" class="pale"><svg width="38" height="31" viewBox="0 0 38 31"><rect y="3" width="38" height="26" rx="4" fill="#abc3d0"/><path d="M0 9h38v5H0z" fill="#98b0bf"/><path d="M10 19h17" stroke="#cbdce6" stroke-width="2"/></svg>Carte</button>
          </div>
          <div class="fields f-small">
            <label for="mode">Mode</label><span class="select"><select id="mode"><option></option></select></span>
            <label for="compte">Compte</label><span class="select"><select id="compte"><option>700000</option></select></span>
          </div>
        </div>

        <div class="line bank-line">
          <div class="fields f-bank">
            <label for="banque">Banque</label><span class="select"><select id="banque"><option></option></select></span>
            <label for="libelle">Libellé</label><input id="libelle" type="text" value="JENNY">
          </div>
          <div class="due">
            <div class="due-row">
              <label for="echeance">Echéance</label>
              <input id="echeance" type="text" value="19/06/2018">
              <button type="button" aria-label="Calendrier échéance"><svg width="16" height="17"><use href="#calendar"/><text x="8" y="15" text-anchor="middle" class="cal-day">23</text></svg></button>
              <button type="button" aria-label="Échéance aujourd'hui"><svg width="18" height="18"><use href="#target"/></svg></button>
            </div>
            <button type="button" class="boxed print-cheque"><svg width="16" height="15" viewBox="0 0 16 15"><path d="M3.500.5h9v5h-9z" fill="#fff" stroke="#999"/><path d="M.5 5.500h15v6H.5z" fill="#ddd" stroke="#aaa"/><path d="M3 6h10v5H3z" fill="#555"/><path d="M3.500 10.500h9v4h-9z" fill="#fff" stroke="#999"/></svg>Imprimer le chèque</button>
          </div>
        </div>

        <div class="fields f-note">
          <label for="remarque">Remarque</label><input id="remarque" type="text">
          <span class="dim">Payeur</span><span class="dim payeur">Patient</span>
        </div>

        <div class="actions">
          <button type="button" class="ok" aria-label="Valider"><svg width="20" height="15" viewBox="0 0 20 15"><path d="M1 7l7 7L19 1" fill="none" stroke="#fff" stroke-width="2"/></svg></button>
          <button type="button" class="boxed cancel"><svg width="15" height="15"><use href="#undo"/></svg>Annuler</button>
        </div>
      </form>
    </main>

    <section class="receipts">
      <h3>Encaissements pour JENNY Alexis</h3>
      <table class="grid-head">
        <colgroup><col class="r-date"><col class="r-mt"><col class="r-ech"><col class="r-md"><col class="r-bq"><col><col class="r-cpt"><col class="r-end"></colgroup>
        <thead><tr><th>Date</th><th>Montant patient</th><th>Echéance</th><th class="md">Md</th><th>Banque payeur</th><th></th><th>Compte</th><th><button aria-label="Colonnes"><svg width="10" height="13" viewBox="0 0 10 13"><path d="M0 0h9v3H0z" fill="#3a4fb8"/><path d="M2.500 2.500h7v10h-7z" fill="#dfe4fb" stroke="#1b2a78"/><path d="M4 5.500h4M4 7.500h4M4 9.500h4" stroke="#3a4fb8"/></svg></button></th></tr></thead>
      </table>
      <div class="grid-wrap">
        <table class="grid" aria-label="Encaissements">
          <colgroup><col class="r-date"><col class="r-mt"><col class="r-ech"><col class="r-md"><col class="r-bq"><col><col class="r-cpt"><col class="r-last"></colgroup>
          <tbody id="rows"></tbody>
        </table>
        <div class="scroll">
          <button aria-label="Monter"><svg width="8" height="5" viewBox="0 0 8 5"><path d="M0 5h8L4 0z"/></svg></button>
          <button aria-label="Descendre"><svg width="8" height="5" viewBox="0 0 8 5"><path d="M0 0h8L4 5z"/></svg></button>
        </div>
      </div>
    </section>
  </div>
</div>

<script>
  // empty lines of the receipts grid
  const rows = document.getElementById('rows');
  for (let i = 0; i < 14; i++) {
    const tr = rows.insertRow();
    for (let j = 0; j < 8; j++) tr.insertCell();
  }
</script>
</body>
</html>
```
FILE: styles.css
```css
* {
  box-sizing: border-box;
}

body {
  margin: 0;
  background: #000;
  color: #000;
  font-family: "Noto Sans", "Open Sans", sans-serif;
  font-size: 11px;
}

button, input, select {
  font: inherit;
  color: inherit;
  border: 0;
  padding: 0;
  margin: 0;
  background: none;
}

button {
  cursor: pointer;
}

a {
  color: inherit;
  text-decoration: none;
}

svg {
  display: block;
  flex: none;
}

.defs {
  position: absolute;
}

.app {
  display: flex;
  flex-direction: column;
  min-height: calc(100vh - 32px);
  margin-bottom: 32px;
  background: #fff;
  position: relative;
}

.notch {
  position: absolute;
  top: 0;
  right: 301px;
  width: 102px;
  height: 7px;
  background: #f4f6f9;
  border: 1px solid #555;
  border-top: 0;
}

/* title bar and menus */
.titlebar {
  display: flex;
  align-items: center;
  height: 23px;
  padding-left: 2px;
  color: #999;
}

.app-title {
  margin-left: 5px;
}

.win-buttons {
  display: flex;
  margin-left: auto;
  padding-right: 2px;
}

.win-buttons button {
  display: flex;
  justify-content: center;
  width: 46px;
}

.menubar {
  display: flex;
  align-items: center;
  height: 22px;
  padding: 0 5px 2px;
  font-size: 12px;
}

.menubar u {
  text-underline-offset: 2px;
}

.menubar .m-patients { width: 80px; margin-left: 23px; }
.menubar .m-num { width: 112px; }
.menubar .m-gestion { width: 75px; }
.menubar .m-compta { width: 107px; }
.menubar .m-outils { width: 69px; }

.menubar .tools {
  margin-left: auto;
}

.mainbar {
  display: flex;
  justify-content: space-between;
  height: 35px;
  padding-left: 10px;
}

.main-left, .main-right {
  display: flex;
  align-items: center;
  padding-bottom: 3px;
}

.main-left {
  gap: 11px;
}

.list-btn {
  display: flex;
  align-items: center;
  gap: 8px;
}

.list-btn svg:last-child {
  margin-top: 16px;
}

.main-right {
  padding-right: 3px;
}

.main-right button {
  width: 35px;
  display: flex;
  justify-content: center;
}

.at { font: 12px "Liberation Sans", sans-serif; fill: #444; }
.cal-day { font: bold 9px "DejaVu Sans", sans-serif; fill: #111; }
.vitale { font: bold 7px "Liberation Serif", serif; fill: #eee; }
.az { font: bold 8px "Liberation Serif", serif; fill: #cfe2fa; }
.sms { font: bold 8px "Liberation Sans", sans-serif; fill: #fff; }
.visa { font: italic bold 9px "Liberation Sans", sans-serif; fill: #1a2368; }

/* patient window */
.window {
  flex: 1;
  display: flex;
  flex-direction: column;
  border: solid #ddd;
  border-width: 1px 2px 0 2px;
  border-right-color: #777;
  padding: 2px 0 0 1px;
}

.patient-bar {
  display: flex;
  align-items: center;
  height: 22px;
  padding: 0 9px 0 4px;
  gap: 11px;
  background: #1b76d3;
  color: #fff;
}

.burger {
  display: grid;
  gap: 3px;
  width: 18px;
}

.burger i {
  height: 2px;
  background: #fff;
}

.patient-bar h1 {
  flex: 1;
  margin: 0 0 0 21px;
  font-size: 13px;
  font-weight: bold;
}

.patient-bar em {
  font-style: normal;
  color: #ecc9ee;
}

.ribbon {
  display: flex;
  height: 48px;
  background: #999;
  border-bottom: 1px solid #333;
}

.group {
  border-right: 1px solid #fff;
  background: linear-gradient(#9b9b9b, #8a8a8a);
}

.caption {
  display: flex;
  justify-content: center;
  align-items: center;
  gap: 6px;
  height: 12px;
  line-height: 12px;
}

.caption svg {
  fill: #777;
}

.icons {
  display: flex;
  align-items: center;
  height: 35px;
  padding-left: 2px;
}

.icons button {
  width: 44px;
  display: flex;
  justify-content: center;
}

.g-edit { width: 106px; }
.g-edit .icons { padding-left: 0; }
.g-edit .icons button { width: 51px; }
.g-civil, .g-facturer { width: 138px; }
.g-facturer .caption { padding-left: 14px; }
.g-trait { width: 222px; }
.g-trait .icons button { width: 42px; }
.g-comm { width: 275px; }
.g-comm .icons { padding-left: 5px; }
.g-img { width: 108px; }
.g-img .icons { padding-left: 0; }

.g-bilans {
  width: 270px;
  background: none;
  border: 0;
}

.icons .tab {
  align-self: flex-start;
  align-items: center;
  height: 37px;
  margin-top: -1px;
  background: #fff;
  border: 1px solid #333;
  border-bottom: 0;
  border-radius: 6px 6px 0 0;
}

.icons .cam {
  width: 61px;
  align-items: center;
  gap: 4px;
}

.cam svg:last-child {
  margin-top: 14px;
}

.icons .cam-on {
  width: 40px;
  height: 37px;
  align-items: center;
  background: #94de94;
}

.ribbon .tools {
  align-self: flex-start;
  margin: 1px 2px 0 auto;
}

.page-head {
  display: flex;
  align-items: center;
  height: 51px;
  padding: 0 32px 0 19px;
  border-bottom: 1px solid #f3f3f3;
}

.page-head h2 {
  width: 135px;
  margin: 0 0 0 17px;
  font-size: 15px;
  font-weight: normal;
}

.page-head button {
  display: flex;
  align-items: center;
  gap: 8px;
  text-align: left;
  line-height: 13px;
}

.page-head .releve {
  width: 168px;
}

.page-head .liens {
  height: 38px;
  padding-left: 5px;
  gap: 5px;
  border-left: 1px solid #888;
}

.print-link, .mail-link {
  font-size: 13px;
  padding-bottom: 5px;
}

.print-link {
  margin-left: auto;
}

.mail-link {
  margin-left: 121px;
}

main {
  flex: 1;
  display: flex;
}

/* acts of the family */
.family {
  width: 782px;
  border-right: 4px solid #f6f6f6;
}

.acts, .grid, .grid-head {
  table-layout: fixed;
  border-collapse: separate;
  border-spacing: 0;
}

.acts {
  width: 565px;
}

.acts td, .acts th {
  padding: 0;
  font-weight: normal;
  white-space: nowrap;
}

.c-pad { width: 45px; }
.c-date { width: 68px; }
.c-dent { width: 42px; }
.c-lib { width: 90px; }
.c-prix { width: 101px; }
.c-part { width: 70px; }

.acts th {
  height: 31px;
  padding-top: 6px;
  font-size: 12px;
}

.acts .famille {
  padding-left: 19px;
  text-align: left;
  font-size: 14px;
}

.acts .patient {
  padding-left: 6px;
}

.acts th:not(:last-child), .person td:not(:last-child), .act td:nth-child(n+5):nth-child(-n+7) {
  border-right: 1px solid #f3f3f3;
}

.person td {
  height: 20px;
}

.person label, .others label {
  display: flex;
  align-items: center;
  font-size: 14px;
  font-weight: bold;
  line-height: 20px;
}

.person label {
  gap: 1px;
  padding-left: 25px;
}

.sub td {
  height: 24px;
  padding-bottom: 4px;
  font-size: 12px;
}

.sub a {
  margin-left: 5px;
  font-size: 10px;
  font-style: italic;
  color: #6464c8;
}

.acts .late td {
  height: 26px;
  padding: 4px 0 0 2px;
}

.act td {
  height: 16px;
  line-height: 16px;
}

.act td:nth-child(5) {
  padding-right: 33px;
  text-align: right;
}

.act label {
  display: flex;
  align-items: center;
  justify-content: space-between;
  padding: 0 3px;
}

.act td:nth-child(7) label {
  padding: 0 5px 0 8px;
}

.selected td:nth-child(n+2) {
  background: #0078d7;
  color: #fff;
}

.selected td:nth-child(6) input {
  box-shadow: 0 0 0 2px #fff;
}

input[type=checkbox] {
  appearance: none;
  flex: none;
  display: grid;
  place-items: center;
  width: 11px;
  height: 11px;
  border: 1px solid #000;
  background: #fff;
}

input[type=checkbox]:checked::before {
  content: "";
  width: 2px;
  height: 4px;
  margin-bottom: 2px;
  border: solid #c01818;
  border-width: 0 2px 2px 0;
  transform: rotate(40deg);
}

.others {
  margin: 18px 0 0;
  padding: 0 0 0 25px;
  list-style: none;
}

.others label {
  gap: 5px;
}

/* payment form */
.payment {
  flex: 1;
  padding: 34px 0 0 33px;
}

.payment input, .payment select {
  height: 19px;
  border-bottom: 1px solid #777;
  border-radius: 0;
  outline: 0;
}

.payment select {
  appearance: none;
  width: 100%;
}

.select {
  position: relative;
  display: block;
}

.select::after {
  content: "";
  position: absolute;
  right: 4px;
  top: 6px;
  border: 4px solid transparent;
  border-top: 5px solid #000;
  border-bottom: 0;
  pointer-events: none;
}

.amount-row {
  display: flex;
  align-items: center;
  height: 24px;
  font-size: 13px;
}

.amount-row label {
  width: 188px;
}

.amount-row label.au {
  width: 45px;
  padding-left: 19px;
}

.amount-row input {
  height: 24px;
}

.amount-row .montant {
  width: 77px;
  text-align: right;
}

.amount-row .date-paie {
  width: 72px;
  margin-right: 2px;
}

.amount-row button + button {
  margin-left: 6px;
}

.line {
  display: grid;
  grid-template-columns: 267px max-content;
}

.modes-line {
  margin-top: 21px;
}

.modes {
  display: flex;
  align-items: flex-end;
  gap: 12px;
  height: 46px;
}

.modes button {
  display: flex;
  flex-direction: column;
  align-items: center;
  font-size: 12px;
  line-height: 13px;
  color: #888;
}

.modes .pale {
  color: #aaa;
}

.fields {
  display: grid;
  gap: 6px;
  align-items: center;
  justify-content: start;
  align-content: start;
}

.fields label, .fields .dim {
  text-align: right;
}

.fields label {
  padding-bottom: 2px;
}

.f-small {
  grid-template-columns: 40px 73px;
  gap: 6px 3px;
  padding-top: 1px;
}

.f-small select {
  padding-left: 4px;
}

.f-bank { grid-template-columns: 49px 187px; }
.f-note { grid-template-columns: 49px 250px; gap: 4px 7px; }

.bank-line {
  margin-top: 40px;
}

.due-row {
  display: flex;
  align-items: center;
}

.due-row input {
  width: 65px;
  margin: 0 4px 0 6px;
}

.due-row button + button {
  margin-left: 4px;
}

.boxed {
  display: flex;
  align-items: center;
  border: 1px solid #777;
}

.print-cheque {
  gap: 7px;
  height: 21px;
  margin-top: 10px;
  padding: 0 5px;
}

.f-note {
  margin-top: 12px;
}

.fields .dim {
  color: #888;
  padding-right: 2px;
}

.fields .payeur {
  text-align: left;
}

.actions {
  display: flex;
  align-items: center;
  gap: 27px;
  margin: 30px 0 0 112px;
}

.ok {
  display: grid;
  place-items: center;
  width: 49px;
  height: 49px;
  border-radius: 50%;
  background: #008000;
}

.cancel {
  width: 73px;
  height: 25px;
  padding-left: 3px;
  gap: 3px;
  font-size: 10px;
}

/* receipts */
.receipts {
  padding-right: 2px;
  background: #efefef;
}

.receipts h3 {
  height: 17px;
  margin: 0;
  padding-left: 5px;
  font-size: 12px;
  font-weight: normal;
  line-height: 17px;
  border-bottom: 1px solid #777;
}

.grid-head {
  width: 100%;
}

.grid-head th {
  height: 20px;
  padding: 0;
  font-weight: normal;
  white-space: nowrap;
  border-bottom: 1px solid #000;
}

.grid-head .md {
  text-align: right;
  padding-right: 5px;
}

.grid-head th button {
  margin-left: 12px;
}

.r-date { width: 67px; }
.r-mt { width: 85px; }
.r-ech { width: 65px; }
.r-md { width: 26px; }
.r-bq { width: 73px; }
.r-cpt { width: 51px; }
.r-end { width: 33px; }
.r-last { width: 16px; }

.grid-wrap {
  display: flex;
  background: #fff;
}

.grid {
  flex: 1;
}

.grid td {
  height: 16px;
  padding: 0;
  border-right: 1px solid #777;
}

.grid tr:nth-child(even) td {
  background-color: #ededed;
}

.grid tr:last-child td {
  height: 12px;
}

.scroll {
  display: flex;
  flex-direction: column;
  justify-content: space-between;
  width: 17px;
  background: #f2f2f2;
}

.scroll button {
  display: grid;
  place-items: center;
  height: 17px;
  border: 1px solid #777;
  background: #fff;
}
```
